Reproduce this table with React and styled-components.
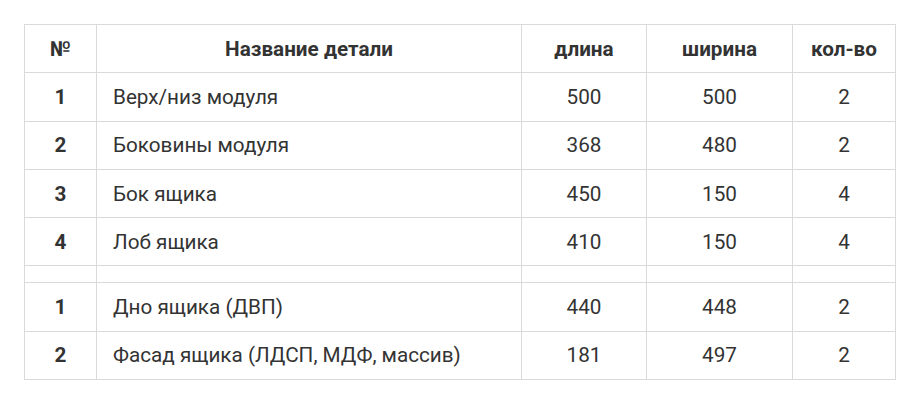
import React from 'react'
import styled, { createGlobalStyle } from 'styled-components'

const GlobalStyle = createGlobalStyle`
  body {
    margin: 0;
    background: #fff;
    font-family: Roboto, "Noto Sans", sans-serif;
    color: #333;
  }
`

const Page = styled.div`
  padding: 24px 25px 24px 24px;
`

const Table = styled.table`
  width: 871px;
  border-collapse: collapse;
  table-layout: fixed;
  font-size: 20.7px;
  line-height: 24px;
`

const Th = styled.th`
  height: 47.3px;
  padding: 0 16px;
  border: 1px solid #dadada;
  font-weight: 700;
  text-align: center;
`

const Td = styled.td`
  height: 47.3px;
  padding: 0 16px;
  border: 1px solid #dadada;
  text-align: ${(p) => (p.$left ? 'left' : 'center')};
  font-weight: ${(p) => (p.$bold ? 700 : 400)};
`

const SpacerCell = styled.td`
  height: 16px;
  padding: 0;
  border: 1px solid #dadada;
`

const rows = [
  ['1', 'Верх/низ модуля', 500, 500, 2],
  ['2', 'Боковины модуля', 368, 480, 2],
  ['3', 'Бок ящика', 450, 150, 4],
  ['4', 'Лоб ящика', 410, 150, 4],
  null,
  ['1', 'Дно ящика (ДВП)', 440, 448, 2],
  ['2', 'Фасад ящика (ЛДСП, МДФ, массив)', 181, 497, 2]
]

export default function App() {
  return (
    <>
      <GlobalStyle />
      <Page>
        <Table>
          <colgroup>
            <col style={{ width: 72 }} />
            <col style={{ width: 425 }} />
            <col style={{ width: 125 }} />
            <col style={{ width: 146 }} />
            <col style={{ width: 103 }} />
          </colgroup>
          <thead>
            <tr>
              <Th>№</Th>
              <Th>Название детали</Th>
              <Th>длина</Th>
              <Th>ширина</Th>
              <Th>кол-во</Th>
            </tr>
          </thead>
          <tbody>
            {rows.map((r, i) =>
              r ? (
                <tr key={i}>
                  <Td $bold>{r[0]}</Td>
                  <Td $left>{r[1]}</Td>
                  <Td>{r[2]}</Td>
                  <Td>{r[3]}</Td>
                  <Td>{r[4]}</Td>
                </tr>
              ) : (
                <tr key={i}>
                  <SpacerCell />
                  <SpacerCell />
                  <SpacerCell />
                  <SpacerCell />
                  <SpacerCell />
                </tr>
              )
            )}
          </tbody>
        </Table>
      </Page>
    </>
  )
}
